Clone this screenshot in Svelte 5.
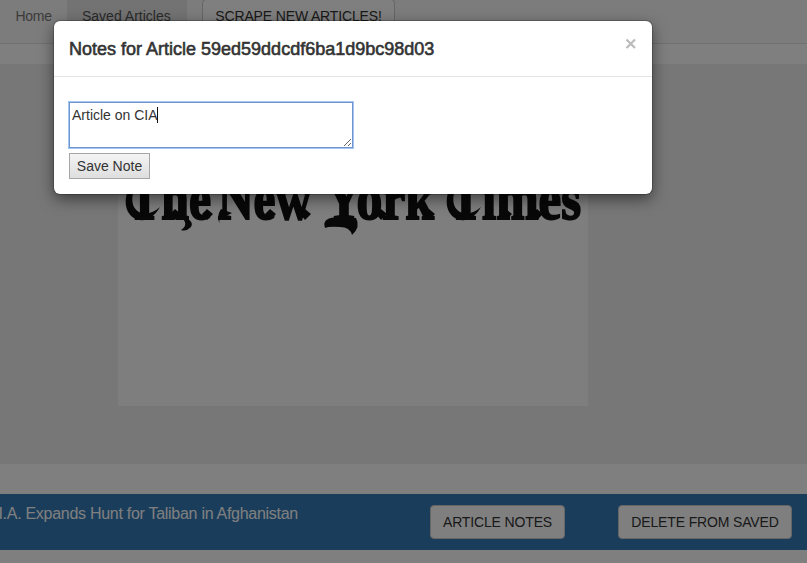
<script>
  let note = $state('Article on CIA');
  const articleId = '59ed59ddcdf6ba1d9bc98d03';
  const masthead = [
    { text: 'The', x: 10, width: 83 },
    { text: 'New', x: 100, width: 93 },
    { text: 'York', x: 207, width: 109 },
    { text: 'Times', x: 331, width: 132 }
  ];
</script>

<div class="page">
  <nav>
    <span class="link home">Home</span>
    <span class="link active">Saved Articles</span>
    <button class="btn scrape">SCRAPE NEW ARTICLES!</button>
  </nav>
  <section class="jumbotron">
    <div class="photo">
      <svg width="470" height="342" viewBox="0 0 470 342" role="img" aria-label="The New York Times">
        {#each masthead as word}
          <text x={word.x} y="155" textLength={word.width} lengthAdjust="spacingAndGlyphs">{word.text}</text>
        {/each}
        <!-- swashes around the masthead -->
        <path d="M10 126C3 144 13 158 26 156Q36 154 42 143Q33 151 24 149C15 147 12 137 16 126Z" />
        <path d="M331 126C324 144 334 158 347 156Q357 154 363 143Q354 151 345 149C336 147 333 137 337 126Z" />
        <path d="M103 145Q97 154 103 161Q98 154 108 152L114 149Z" />
        <path d="M222 153Q203 153 207 164Q211 162 222 163Q232 163 234 171Q243 163 238 154Z" />
        <path d="M62 152Q77 156 73 163Q68 168 63 166Q72 160 62 152Z" />
        <path d="M52 150l5-5 6 5-6 6zM84 150l5-5 6 5-6 6zM147 150l5-5 6 5-6 6zM182 150l5-5 6 5-6 6zM258 150l5-5 6 5-6 6zM306 150l5-5 6 5-6 6zM383 150l5-5 6 5-6 6zM414 150l5-5 6 5-6 6z" />
      </svg>
    </div>
  </section>
  <article>
    <h3>I.A. Expands Hunt for Taliban in Afghanistan</h3>
    <button class="btn notes">ARTICLE NOTES</button>
    <button class="btn delete">DELETE FROM SAVED</button>
  </article>
  <div class="backdrop"></div>
  <div class="modal" role="dialog" aria-label="Article notes">
    <header>
      <h4>Notes for Article {articleId}</h4>
      <button class="close" aria-label="Close">
        <svg width="12" height="12" viewBox="0 0 12 12"><path d="M1.5 1.5 10 10M10 1.5 1.5 10" /></svg>
      </button>
    </header>
    <div class="body">
      <div class="field">
        <textarea bind:value={note}></textarea>
        <i class="caret"></i>
      </div>
      <button class="save">Save Note</button>
    </div>
  </div>
</div>

<style>
  :global(body) { overflow: hidden; }
  .page, .page * { box-sizing: border-box; }
  .page {
    position: relative;
    width: 807px;
    height: 563px;
    overflow: hidden;
    background: #fff;
    color: #333;
    font: 14px/20px "Liberation Sans", Arial, sans-serif;
  }
  button, textarea { font: inherit; color: inherit; margin: 0; }
  nav {
    display: flex;
    height: 44px;
    background: #f8f8f8;
    border-bottom: 1px solid #e0e0e0;
  }
  .link { padding-top: 6px; color: #777; white-space: nowrap; }
  .home { width: 67px; padding-left: 15.5px; letter-spacing: -0.3px; }
  .active { width: 120px; padding-left: 15px; background: #e7e7e7; color: #555; }
  .btn {
    height: 34px;
    padding: 0;
    border: 1px solid #ccc;
    border-radius: 4px;
    background: #fff;
    text-align: center;
    white-space: nowrap;
    letter-spacing: -0.15px;
  }
  .scrape { width: 193px; margin: -1px 0 0 15px; }
  .jumbotron {
    height: 400px;
    margin-top: 20px;
    padding-left: 118px;
    background: #eee;
  }
  .photo { width: 470px; height: 342px; background: #fdfdfd; }
  .photo svg { display: block; }
  .photo text {
    font: bold 61px "Liberation Serif", serif;
    fill: #111;
    stroke: #111;
    stroke-width: 2px;
  }
  .photo path { fill: #111; }
  article {
    display: flex;
    height: 56px;
    margin-top: 30px;
    background: #337ab7;
  }
  h3 {
    display: flex;
    justify-content: flex-end;
    flex: none;
    width: 298px;
    margin: 10px 132px 0 0;
    font-size: 16px;
    line-height: 20px;
    font-weight: 400;
    letter-spacing: -0.28px;
    white-space: nowrap;
    color: #fff;
  }
  .notes { width: 135px; margin-top: 11px; }
  .delete { width: 174px; margin: 11px 0 0 53px; }
  .backdrop { position: absolute; inset: 0; background: rgba(0, 0, 0, 0.5); }
  .modal {
    position: absolute;
    left: 54px;
    top: 21px;
    width: 598px;
    height: 173px;
    border-radius: 6px;
    background: #fff;
    box-shadow: 0 0 0 1px rgba(0, 0, 0, 0.2), 0 5px 15px rgba(0, 0, 0, 0.5);
  }
  header {
    display: flex;
    justify-content: space-between;
    height: 56px;
    padding: 16px 15px 0;
    border-bottom: 1px solid #e5e5e5;
  }
  h4 {
    margin: 0;
    font-size: 18px;
    line-height: 25px;
    font-weight: 400;
    white-space: nowrap;
    -webkit-text-stroke: 0.6px #333;
  }
  .close { width: 12px; height: 12px; margin-top: 1px; padding: 0; border: 0; background: none; }
  .close svg { display: block; fill: none; stroke: #bbb; stroke-width: 2.2; }
  .body { padding: 24px 14px 0; }
  .field { position: relative; width: 286px; height: 48px; }
  textarea {
    display: block;
    width: 284px;
    height: 46px;
    margin: 0 1px;
    padding: 2px 2px;
    border: 1px solid #6f95cf;
    border-radius: 0;
    outline: none;
    overflow: hidden;
    background: #fff;
    box-shadow: 0 0 0 1px #a6c6f2;
    position: relative;
    top: 1px;
  }
  .caret { position: absolute; left: 89px; top: 6px; width: 1px; height: 16px; background: #111; }
  .save {
    display: block;
    width: 81px;
    height: 26px;
    margin: 4px 0 0 1px;
    padding: 0;
    border: 1px solid #a6a6a6;
    background: linear-gradient(#f4f4f4, #dedede);
  }
</style>
